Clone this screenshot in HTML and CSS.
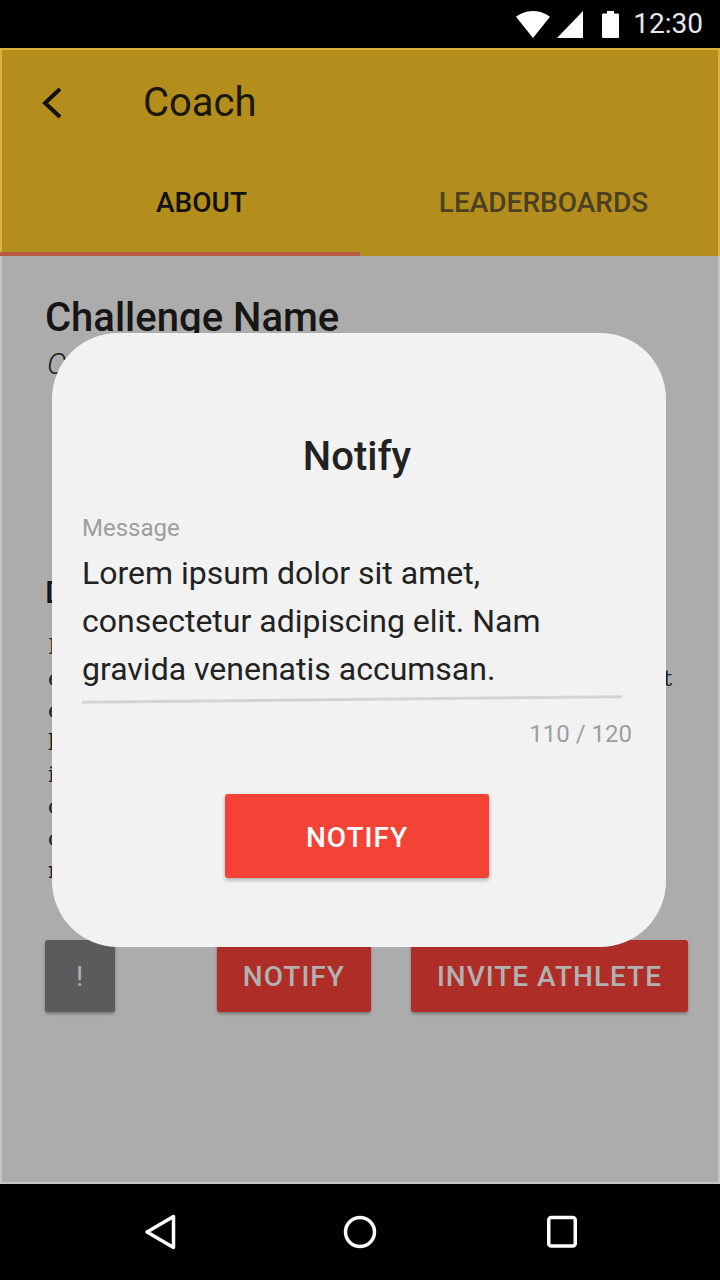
FILE: index.html
```html
<!DOCTYPE html>
<html lang="en">
<head>
<meta charset="utf-8">
<title>Coach – Challenge</title>
<link rel="stylesheet" href="styles.css">
</head>
<body>
<div class="device">
  <div class="statusbar">
    <svg class="sb-wifi" viewBox="0.36 3 23.28 18.5" width="34" height="27"><path d="M12.01 21.49L23.64 7c-.45-.34-4.93-4-11.64-4C5.28 3 .81 6.66.36 7l11.63 14.49.01.01.01-.01z" fill="#fff"/></svg>
    <svg class="sb-signal" viewBox="2 2 20 20" width="26" height="27" preserveAspectRatio="none"><path d="M2 22h20V2z" fill="#fff"/></svg>
    <svg class="sb-battery" viewBox="0 0 17 27" width="17" height="27"><rect x="5" y="0" width="7" height="3" fill="#fff"/><rect x="0" y="2.5" width="17" height="24.5" rx="1" fill="#fff"/></svg>
    <span class="sb-time">12:30</span>
  </div>

  <div class="app">
    <header class="appbar">
      <div class="toolbar">
        <button class="back-btn" aria-label="Back">
          <svg viewBox="0 0 24 34" width="24" height="34"><polyline points="20,3 5,17 20,31" fill="none" stroke="#111" stroke-width="4"/></svg>
        </button>
        <h1 class="toolbar-title">Coach</h1>
      </div>
      <nav class="tabs">
        <a class="tab tab-about active">ABOUT</a>
        <a class="tab tab-leader">LEADERBOARDS</a>
      </nav>
    </header>

    <main class="content">
      <h2 class="challenge-title">Challenge Name</h2>
      <p class="coach-line">Coach: Mike Johnson</p>
      <h3 class="section-title">Description</h3>
      <p class="desc">
        <span class="desc-line">In hac habitasse platea dictumst. Vivamus</span>
        <span class="desc-line desc-full">euismod, ligula sed pretium, dolor est blandit</span>
        <span class="desc-line">enim, vitae volutpat nulla tellus in ipsum.</span>
        <span class="desc-line">luctus, neque at tincidunt bibendum, quam</span>
        <span class="desc-line">ipsum dictum purus, a pulvinar magna nisl</span>
        <span class="desc-line">consequat mauris. Aliquam erat volutpat.</span>
        <span class="desc-line">curabitur vel lacus at nunc feugiat</span>
        <span class="desc-line">rhoncus.</span>
      </p>
      <div class="actions">
        <button class="btn btn-grey">!</button>
        <button class="btn btn-red btn-push">NOTIFY</button>
        <button class="btn btn-red btn-invite">INVITE ATHLETE</button>
      </div>
    </main>
  </div>

  <div class="navbar">
    <svg viewBox="0 0 40 40" width="40" height="40"><polygon points="7,20 33.5,4.5 33.5,35.5" fill="none" stroke="#fff" stroke-width="3.5" stroke-linejoin="round"/></svg>
    <svg viewBox="0 0 40 40" width="40" height="40"><circle cx="20" cy="20" r="14.5" fill="none" stroke="#fff" stroke-width="3.5"/></svg>
    <svg viewBox="0 0 40 40" width="40" height="40"><rect x="6.75" y="5.5" width="26.5" height="28.5" rx="2.5" fill="none" stroke="#fff" stroke-width="3.5"/></svg>
  </div>
</div>

<div class="dialog-layer">
  <section class="dialog">
    <h2 class="dialog-title">Notify</h2>
    <div class="field">
      <label class="field-label">Message</label>
      <div class="field-text">Lorem ipsum dolor sit amet, consectetur adipiscing elit. Nam gravida venenatis accumsan.</div>
      <div class="field-line"></div>
      <div class="field-counter">110 / 120</div>
    </div>
    <button class="dialog-btn">NOTIFY</button>
  </section>
</div>
</body>
</html>
```

FILE: styles.css
```css
* { box-sizing: border-box; }

html, body {
  margin: 0;
  padding: 0;
}

body {
  width: 720px;
  height: 1280px;
  overflow: hidden;
  font-family: Roboto, "Noto Sans", sans-serif;
  background: #000;
}

.device {
  display: flex;
  flex-direction: column;
  height: 1280px;
}

/* status bar */
.statusbar {
  height: 48px;
  flex: none;
  background: #000;
  display: flex;
  align-items: center;
  justify-content: flex-end;
  padding-right: 17px;
}
.sb-wifi { margin-right: 7px; }
.sb-signal { margin-right: 19px; }
.sb-battery { margin-right: 14px; }
.sb-time {
  color: #e8e8e8;
  font-size: 28px;
  line-height: 32px;
}

/* app */
.app {
  flex: 1;
  display: flex;
  flex-direction: column;
  min-height: 0;
}

.appbar {
  background: #b48e1c;
  border: 2px solid #d8b23d;
  border-bottom: 0;
}

.toolbar {
  height: 106px;
  display: flex;
  align-items: center;
  padding-left: 38px;
}

.back-btn {
  border: 0;
  background: none;
  padding: 0;
  width: 24px;
  height: 34px;
  display: block;
}
.back-btn svg { display: block; }

.toolbar-title {
  margin: 0 0 0 79px;
  font-size: 40px;
  line-height: 48px;
  font-weight: 400;
  color: #1b1709;
}

.tabs {
  display: flex;
  height: 100px;
  margin-left: -2px;
}
.tab {
  flex: none;
  width: 360px;
  display: flex;
  align-items: center;
  justify-content: center;
  font-size: 28px;
  line-height: 32px;
  font-weight: 500;
  color: #4b4021;
  border-bottom: 4px solid transparent;
  padding-bottom: 2px;
}
.tab-about { padding-left: 43px; }
.tab-leader { padding-left: 7px; }
.tab.active {
  color: #111;
  border-bottom-color: #b95a48;
}

/* page content */
.content {
  flex: 1;
  background: #acacac;
  border: 2px solid #c6c6c6;
  border-top: 0;
  padding: 38px 30px 0 43px;
}

.challenge-title {
  margin: 0;
  font-size: 40px;
  line-height: 48px;
  font-weight: 500;
  color: #161616;
}

.coach-line {
  margin: 2px 0 0 2px;
  font-size: 30px;
  line-height: 40px;
  font-weight: 300;
  font-style: italic;
  color: #1c1c1c;
}

.section-title {
  margin: 188px 0 0;
  font-size: 32px;
  line-height: 40px;
  font-weight: 500;
  color: #161616;
}

.desc {
  margin: 19px 0 0 3px;
  width: 624px;
  font-family: "DejaVu Serif", "Liberation Serif", serif;
  font-size: 22px;
  line-height: 32px;
  color: #1e1e1e;
}
.desc-line {
  display: block;
  white-space: nowrap;
}
.desc-full {
  text-align: justify;
  text-align-last: justify;
}

.actions {
  margin-top: 53px;
  display: flex;
  align-items: center;
}

.btn {
  height: 72px;
  border: 0;
  border-radius: 3px;
  font-family: Roboto, sans-serif;
  font-size: 28px;
  font-weight: 500;
  letter-spacing: 1px;
  color: #b1b1b1;
  padding: 0 26px;
  box-shadow: 0 2px 3px rgba(0, 0, 0, 0.3);
}
.btn-grey {
  width: 70px;
  padding: 0;
  background: #5b5b5b;
  font-weight: 400;
}
.btn-red { background: #ae2d27; }
.btn-push { margin-left: auto; }
.btn-invite { margin-left: 40px; }

/* system nav bar */
.navbar {
  height: 96px;
  flex: none;
  background: #000;
  display: grid;
  grid-template-columns: repeat(3, 200px);
  justify-content: center;
  justify-items: center;
  align-items: center;
}
.navbar svg { display: block; }
.navbar svg:last-child { margin-left: 4px; }

/* dialog */
.dialog-layer {
  position: fixed;
  inset: 0;
  display: flex;
  align-items: center;
  justify-content: center;
  padding-right: 2px;
}

.dialog {
  width: 614px;
  background: #f2f2f2;
  border-radius: 66px;
  padding: 102px 34px 69px 30px;
}

.dialog-title {
  margin: 0;
  text-align: center;
  font-size: 40px;
  line-height: 44px;
  font-weight: 500;
  color: #222;
}

.field { margin-top: 35px; }

.field-label {
  display: block;
  font-size: 24px;
  line-height: 28px;
  color: #9e9e9e;
}

.field-text {
  margin-top: 7px;
  width: 540px;
  font-size: 32px;
  line-height: 48px;
  color: #222;
}

.field-line {
  margin-top: 5px;
  width: 540px;
  height: 3px;
  background: #d4d4d4;
  transform: rotate(-0.6deg);
}

.field-counter {
  margin-top: 19px;
  text-align: right;
  font-size: 24px;
  line-height: 28px;
  color: #9e9e9e;
}

.dialog-btn {
  display: block;
  margin: 46px auto 0;
  width: 264px;
  height: 84px;
  border: 0;
  border-radius: 3px;
  background: #f44336;
  color: #fff;
  font-family: Roboto, sans-serif;
  font-size: 28px;
  font-weight: 500;
  letter-spacing: 1px;
  padding-top: 4px;
  box-shadow: 0 2px 4px rgba(0, 0, 0, 0.3);
}
```
